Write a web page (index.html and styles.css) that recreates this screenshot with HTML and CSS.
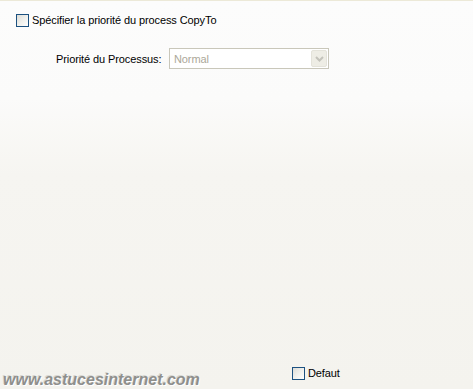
FILE: index.html
```html
<!DOCTYPE html>
<html lang="fr">
<head>
  <meta charset="UTF-8">
  <title>Priorité</title>
  <link rel="stylesheet" href="styles.css">
</head>
<body>
  <div class="panel">
    <label class="check-row">
      <span class="check"></span>
      <span>Spécifier la priorité du process CopyTo</span>
    </label>

    <div class="field-row">
      <span class="field-label">Priorité du Processus:</span>
      <div class="select">
        <span class="select-value">Normal</span>
        <span class="select-btn">
          <svg width="9" height="6" viewBox="0 0 9 6">
            <path d="M1 1 L4.5 4.5 L8 1" fill="none" stroke="#c4c3bb" stroke-width="2"/>
          </svg>
        </span>
      </div>
    </div>

    <div class="spacer"></div>

    <div class="footer">
      <label class="check-row default">
        <span class="check"></span>
        <span>Defaut</span>
      </label>
    </div>

    <div class="watermark">www.astucesinternet.com</div>
  </div>
</body>
</html>
```

FILE: styles.css
```css
*{
  margin: 0;
  padding: 0;
  box-sizing: border-box;
}
body {
  font-family: "Liberation Sans", Arial, sans-serif;
  font-size: 11px;
  letter-spacing: -0.1px;
  color: #000;
  background: #f4f3ee;
}
.panel {
  position: relative;
  width: 473px;
  height: 389px;
  border-top: 1px solid #ece9d8;
  background: linear-gradient(to bottom, #fcfcfc 0%, #fbfbfa 25%, #f6f5f1 45%, #f4f3ee 100%);
  display: flex;
  flex-direction: column;
  overflow: hidden;
}
.check-row {
  display: flex;
  align-items: center;
  gap: 3px;
  line-height: 13px;
}
.panel > .check-row {
  margin: 13px 0 0 16px;
}
.check {
  width: 13px;
  height: 13px;
  border: 1px solid #1c5180;
  background: linear-gradient(135deg, #dcdcd7 0%, #f0f0ec 50%, #fff 100%);
}
.field-row {
  display: flex;
  align-items: center;
  margin: 21px 0 0 56px;
}
.field-label {
  width: 113px;
}
.select {
  display: flex;
  align-items: center;
  width: 160px;
  height: 21px;
  border: 1px solid #c9c7ba;
  background: #fff;
  padding: 1px;
}
.select-value {
  flex: 1;
  padding-left: 3px;
  color: #aca899;
}
.select-btn {
  width: 16px;
  height: 17px;
  border-radius: 2px;
  background: #eeede5;
  border: 1px solid #e4e3da;
  display: flex;
  align-items: center;
  justify-content: center;
}
.spacer {
  flex: 1;
}
.footer {
  display: flex;
  padding: 0 0 9px 292px;
}
.watermark {
  position: absolute;
  left: 3px;
  bottom: 0px;
  font-family: "Liberation Sans", sans-serif;
  font-size: 16px;
  font-weight: bold;
  font-style: italic;
  color: #8f8f8c;
  letter-spacing: 0;
  text-shadow: 1px 1px 0 #fff, -1px -1px 0 #d8d8d4;
}
```
